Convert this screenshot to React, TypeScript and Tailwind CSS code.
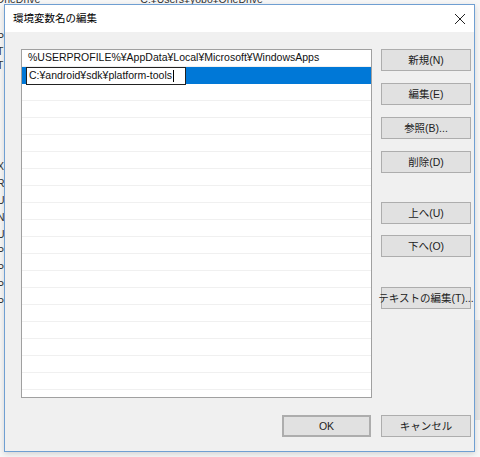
import React from 'react';

const font = { fontFamily: '"Liberation Sans", "Noto Sans CJK JP", sans-serif' };

const sideButtons = [
  { label: '新規(N)', mt: 'mt-0' },
  { label: '編集(E)', mt: 'mt-[12px]' },
  { label: '参照(B)...', mt: 'mt-[12px]' },
  { label: '削除(D)', mt: 'mt-[12px]' },
  { label: '上へ(U)', mt: 'mt-[29px]' },
  { label: '下へ(O)', mt: 'mt-[11px]' },
  { label: 'テキストの編集(T)...', mt: 'mt-[30px]' },
];

function WinButton({ label, className = '' }: { label: string; className?: string }) {
  return (
    <button
      className={`h-[22px] bg-[#e1e1e1] border border-[#adadad] text-[10.5px] leading-none text-[#222] flex items-center justify-center whitespace-nowrap ${className}`}
    >
      {label}
    </button>
  );
}

export default function App() {
  const emptyRows = Array.from({ length: 19 });
  return (
    <div
      className="relative w-[480px] h-[457px] overflow-hidden bg-[#f7f7f7] text-black"
      style={font}
    >
      {/* window behind the dialog */}
      <div className="absolute left-0 top-[-8px] flex gap-[100px] text-[10.5px] text-[#333] whitespace-nowrap">
        <span className="ml-[-4px]">OneDrive</span>
        <span>C:¥Users¥yobo¥OneDrive</span>
      </div>
      <div className="absolute left-[-3px] top-[30px] flex flex-col text-[10.5px] leading-[14px] text-[#333]">
        <span>P</span>
        <span>T</span>
        <span>T</span>
      </div>
      <div className="absolute left-[-3px] top-[158px] flex flex-col text-[10.5px] leading-[17px] text-[#333]">
        <span>X</span>
        <span>R</span>
        <span>U</span>
        <span>N</span>
        <span>U</span>
        <span>P</span>
        <span>P</span>
        <span>P</span>
        <span>P</span>
      </div>
      <div className="absolute right-0 top-[320px] w-[8px] h-[100px] bg-[#e5e5e5]" />

      {/* dialog */}
      <div className="absolute left-[4px] top-[4px] w-[471px] h-[448px] border border-[#6f9fd2] bg-[#f0f0f0] flex flex-col shadow-[0_2px_6px_rgba(0,0,0,0.15)]">
        <div className="h-[27px] bg-white flex items-center justify-between pl-[8px] pr-[7px] shrink-0">
          <span className="text-[10.5px]">環境変数名の編集</span>
          <svg width="12" height="12" viewBox="0 0 12 12" className="mr-[1px]">
            <path d="M1 1 L11 11 M11 1 L1 11" stroke="#222" strokeWidth="1" />
          </svg>
        </div>

        <div className="flex pl-[16px] pt-[17px]">
          <div className="w-[351px] h-[349px] border border-[#a0a0a0] bg-white flex flex-col overflow-hidden">
            <div className="h-[17px] shrink-0 flex items-center pl-[6px] text-[10.5px] text-[#111] border-b border-[#f0f0f0] whitespace-nowrap">
              %USERPROFILE%¥AppData¥Local¥Microsoft¥WindowsApps
            </div>
            <div className="h-[17px] shrink-0 flex bg-[#0078d7]">
              <div className="w-[160px] ml-[4px] h-[18px] bg-white border border-[#222] flex items-center pl-[2px] text-[10.5px] text-[#111] whitespace-nowrap">
                C:¥android¥sdk¥platform-tools
                <span className="inline-block w-px h-[12px] bg-black ml-[1px]" />
              </div>
            </div>
            {emptyRows.map((_, i) => (
              <div key={i} className="h-[17px] shrink-0 border-b border-[#f0f0f0]" />
            ))}
          </div>

          <div className="ml-[9px] flex flex-col w-[90px]">
            {sideButtons.map((b) => (
              <WinButton key={b.label} label={b.label} className={`${b.mt} w-[90px]`} />
            ))}
          </div>
        </div>

        <div className="flex justify-end gap-[10px] pr-[3px] mt-[17px]">
          <WinButton label="OK" className="w-[89px] border-2 border-[#0078d7]" />
          <WinButton label="キャンセル" className="w-[90px]" />
        </div>
      </div>
    </div>
  );
}
